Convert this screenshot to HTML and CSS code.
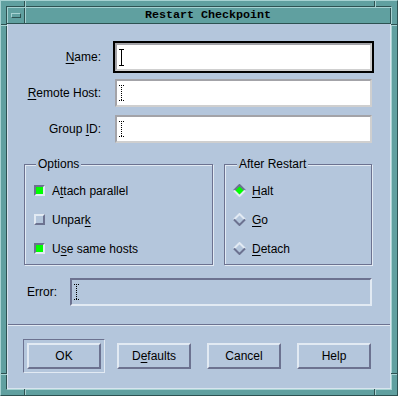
FILE: index.html
```html
<!DOCTYPE html>
<html lang="en">
<head>
    <meta charset="UTF-8">
    <title>Restart Checkpoint</title>
    <link rel="stylesheet" href="styles.css">
</head>
<body>
    <div class="window">
        <!-- resize handle notches on the frame -->
        <span class="notch v" style="left:23px;top:0"></span>
        <span class="notch v" style="left:373px;top:0"></span>
        <span class="notch v" style="left:23px;bottom:0"></span>
        <span class="notch v" style="left:373px;bottom:0"></span>
        <span class="notch h" style="top:23px;left:0"></span>
        <span class="notch h" style="top:372px;left:0"></span>
        <span class="notch h" style="top:23px;right:0"></span>
        <span class="notch h" style="top:372px;right:0"></span>

        <div class="frame-inner">
            <div class="titlebar">
                <div class="menu-btn"><span class="menu-icon"></span></div>
                <div class="title">Restart Checkpoint</div>
            </div>

            <div class="client">
                <div class="main">
                    <div class="fields">
                        <div class="row">
                            <label class="lbl"><u>N</u>ame:</label>
                            <div class="field focus">
                                <svg width="5" height="17" viewBox="0 0 5 17"><path d="M0 0.5H5M2.5 0V17M0 16.5H5" stroke="#000" fill="none"/></svg>
                            </div>
                        </div>
                        <div class="row">
                            <label class="lbl"><u>R</u>emote Host:</label>
                            <div class="field">
                                <svg width="5" height="16" viewBox="0 0 5 16"><path d="M0 0.5H5M2.5 0V16M0 15.5H5" stroke="#000" stroke-dasharray="1 1" fill="none"/></svg>
                            </div>
                        </div>
                        <div class="row">
                            <label class="lbl">Group <u>I</u>D:</label>
                            <div class="field">
                                <svg width="5" height="16" viewBox="0 0 5 16"><path d="M0 0.5H5M2.5 0V16M0 15.5H5" stroke="#000" stroke-dasharray="1 1" fill="none"/></svg>
                            </div>
                        </div>
                    </div>

                    <div class="groups">
                        <fieldset class="group options">
                            <legend>Options</legend>
                            <div class="opt"><span class="check on"></span>A<u>t</u>tach parallel</div>
                            <div class="opt"><span class="check"></span>Unpar<u>k</u></div>
                            <div class="opt"><span class="check on"></span>U<u>s</u>e same hosts</div>
                        </fieldset>
                        <fieldset class="group after">
                            <legend>After Restart</legend>
                            <div class="opt">
                                <svg class="radio" width="13" height="13" viewBox="0 0 13 13">
                                    <polygon points="6.5,1.5 11.5,6.5 6.5,11.5 1.5,6.5" fill="#00ff00"/>
                                    <polyline points="1,6.5 6.5,1 12,6.5" stroke="#6c7290" stroke-width="2" fill="none"/>
                                    <polyline points="1,6.5 6.5,12 12,6.5" stroke="#e2eaf3" stroke-width="2" fill="none"/>
                                </svg>
                                <u>H</u>alt
                            </div>
                            <div class="opt">
                                <svg class="radio" width="13" height="13" viewBox="0 0 13 13">
                                    <polyline points="1,6.5 6.5,1 12,6.5" stroke="#e2eaf3" stroke-width="2" fill="none"/>
                                    <polyline points="1,6.5 6.5,12 12,6.5" stroke="#6c7290" stroke-width="2" fill="none"/>
                                </svg>
                                <u>G</u>o
                            </div>
                            <div class="opt">
                                <svg class="radio" width="13" height="13" viewBox="0 0 13 13">
                                    <polyline points="1,6.5 6.5,1 12,6.5" stroke="#e2eaf3" stroke-width="2" fill="none"/>
                                    <polyline points="1,6.5 6.5,12 12,6.5" stroke="#6c7290" stroke-width="2" fill="none"/>
                                </svg>
                                <u>D</u>etach
                            </div>
                        </fieldset>
                    </div>

                    <div class="error-row">
                        <label class="error-lbl">Error:</label>
                        <div class="field readonly">
                            <svg width="5" height="16" viewBox="0 0 5 16"><path d="M0 0.5H5M2.5 0V16M0 15.5H5" stroke="#000" stroke-dasharray="1 1" fill="none"/></svg>
                        </div>
                    </div>
                </div>

                <div class="separator"></div>

                <div class="buttons">
                    <span class="default-ring"><button class="btn">OK</button></span>
                    <button class="btn">D<u>e</u>faults</button>
                    <button class="btn">Cancel</button>
                    <button class="btn">Help</button>
                </div>
            </div>
        </div>
    </div>
</body>
</html>
```

FILE: styles.css
```css
* {
    margin: 0;
    padding: 0;
    box-sizing: border-box;
}

body {
    font-family: 'Liberation Sans', Arial, sans-serif;
    font-size: 12px;
    color: #000;
    background: #ffffff;
}

u {
    text-decoration: underline;
    text-underline-offset: 2px;
}

/* window manager frame */
.window {
    position: relative;
    width: 398px;
    height: 396px;
    background: #60a0a0;
    border: 1px solid;
    border-color: #a6d2d2 #2d5252 #2d5252 #a6d2d2;
    padding: 5px;
}

.notch {
    position: absolute;
    background: #2d5252;
}

.notch.v {
    width: 2px;
    height: 6px;
    border-right: 1px solid #a6d2d2;
}

.notch.h {
    width: 6px;
    height: 2px;
    border-bottom: 1px solid #a6d2d2;
}

.frame-inner {
    height: 100%;
    display: flex;
    flex-direction: column;
    border: 1px solid;
    border-color: #2d5252 #a6d2d2 #a6d2d2 #2d5252;
}

.titlebar {
    display: flex;
    height: 17px;
    background: #60a0a0;
    border-top: 1px solid #a6d2d2;
    border-bottom: 1px solid #2d5252;
}

.menu-btn {
    width: 18px;
    display: flex;
    align-items: center;
    justify-content: center;
    border-left: 1px solid #a6d2d2;
    border-right: 1px solid #2d5252;
}

.menu-icon {
    width: 10px;
    height: 5px;
    border: 1px solid;
    border-color: #a6d2d2 #2d5252 #2d5252 #a6d2d2;
}

.title {
    flex: 1;
    text-align: center;
    font-family: 'Liberation Mono', 'Courier New', monospace;
    font-weight: bold;
    font-size: 11.7px;
    line-height: 15px;
    border-left: 1px solid #a6d2d2;
    border-right: 1px solid #2d5252;
}

/* dialog body */
.client {
    flex: 1;
    background: #b4c6dc;
    border: 1px solid #d8e4ee;
    border-top: none;
}

.main {
    padding: 19px 18px 18px 16px;
}

.fields {
    display: flex;
    flex-direction: column;
    gap: 8px;
}

.row {
    display: flex;
    align-items: center;
    gap: 14px;
    height: 28px;
}

.lbl {
    width: 77px;
    text-align: right;
}

.field {
    flex: 1;
    height: 28px;
    display: flex;
    align-items: center;
    padding-left: 2px;
    background: #ffffff;
    border: 2px solid;
    border-color: #a3a3a8 #cfcfcf #cfcfcf #a3a3a8;
}

.field.focus {
    outline: 2px solid #000;
}

.field.readonly {
    background: #b4c6dc;
    border-color: #6c7290 #e2eaf3 #e2eaf3 #6c7290;
}

.groups {
    display: flex;
    gap: 11px;
    margin-top: 14px;
}

.group {
    border: 1px solid #6c7290;
    box-shadow: inset 1px 1px 0 #e2eaf3, 1px 1px 0 #e2eaf3;
    padding: 5px 0 1px 9px;
}

.group legend {
    line-height: 14px;
    padding: 0 2px;
    margin-left: 2px;
    background: #b4c6dc;
}

.options {
    width: 189px;
}

.after {
    width: 148px;
    padding-left: 8px;
}

.after legend {
    margin-left: 4px;
}

.opt {
    display: flex;
    align-items: center;
    height: 29px;
}

.check {
    width: 11px;
    height: 11px;
    margin-right: 7px;
    background: #b4c6dc;
    border: 2px solid;
    border-color: #e2eaf3 #6c7290 #6c7290 #e2eaf3;
}

.check.on {
    background: #00ff00;
    border-color: #6c7290 #e2eaf3 #e2eaf3 #6c7290;
}

.radio {
    margin-right: 6px;
}

.error-row {
    display: flex;
    align-items: center;
    margin-top: 13px;
}

.error-lbl {
    width: 46px;
    padding-left: 3px;
}

.separator {
    height: 2px;
    border-top: 1px solid #6c7290;
    border-bottom: 1px solid #e2eaf3;
}

.buttons {
    display: flex;
    gap: 16px;
    padding: 17px 0 0 19px;
}

.default-ring {
    display: flex;
    margin: -4px;
    padding: 3px;
    border: 1px solid;
    border-color: #6c7290 #e2eaf3 #e2eaf3 #6c7290;
}

.btn {
    width: 74px;
    height: 26px;
    font-family: 'Liberation Sans', Arial, sans-serif;
    font-size: 12px;
    color: #000;
    background: #b4c6dc;
    border: 2px solid;
    border-color: #e2eaf3 #6c7290 #6c7290 #e2eaf3;
}
```
